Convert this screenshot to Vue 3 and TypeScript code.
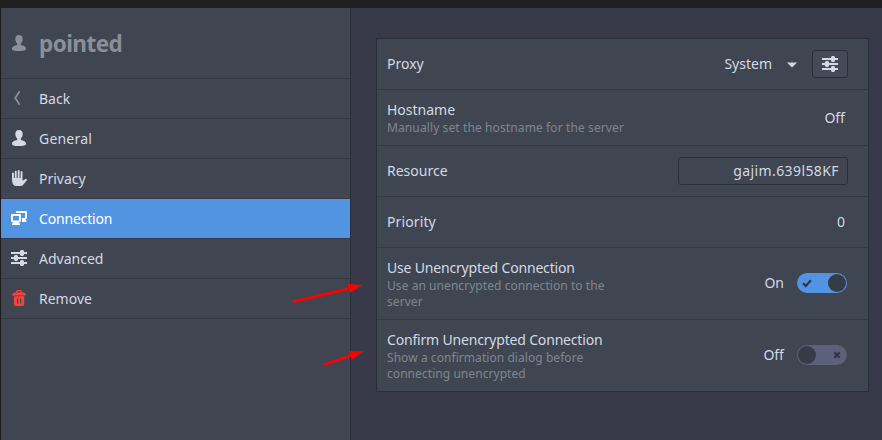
<script setup lang="ts">
import { ref } from 'vue'

interface NavItem { id: string; label: string }
interface Setting {
  id: string
  label: string
  hint?: string
  kind: 'proxy' | 'text' | 'entry' | 'switch'
  value: string
  on?: boolean
}

const account = 'pointed'
const nav: NavItem[] = [
  { id: 'back', label: 'Back' },
  { id: 'general', label: 'General' },
  { id: 'privacy', label: 'Privacy' },
  { id: 'connection', label: 'Connection' },
  { id: 'advanced', label: 'Advanced' },
  { id: 'remove', label: 'Remove' },
]
const active = ref('connection')

const settings = ref<Setting[]>([
  { id: 'proxy', label: 'Proxy', kind: 'proxy', value: 'System' },
  { id: 'hostname', label: 'Hostname', hint: 'Manually set the hostname for the server', kind: 'text', value: 'Off' },
  { id: 'resource', label: 'Resource', kind: 'entry', value: 'gajim.639l58KF' },
  { id: 'priority', label: 'Priority', kind: 'text', value: '0' },
  { id: 'unencrypted', label: 'Use Unencrypted Connection', hint: 'Use an unencrypted connection to the server', kind: 'switch', value: '', on: true },
  { id: 'confirm', label: 'Confirm Unencrypted Connection', hint: 'Show a confirmation dialog before connecting unencrypted', kind: 'switch', value: '', on: false },
])
</script>

<template>
  <div class="window">
    <div class="titlebar"></div>
    <div class="body">
      <aside class="sidebar">
        <header class="account">
          <svg class="icon" viewBox="0 0 16 16"><path d="M8 0C5.700 0 4.300 1.600 4.300 4c0 2 .9 3.600 1.900 4.600v1.500C3.500 10.500 1 11.600 1 14c0 1.500 2.500 2 7 2s7-.5 7-2c0-2.400-2.500-3.500-5.200-3.900V8.600c1-1 1.900-2.600 1.900-4.600C11.700 1.600 10.300 0 8 0z" /></svg>
          <h1>{{ account }}</h1>
        </header>
        <nav>
          <div
            v-for="item in nav"
            :key="item.id"
            class="nav-item"
            :class="[item.id, { active: item.id === active }]"
            @click="active = item.id"
          >
            <svg class="icon" viewBox="0 0 16 16">
              <path v-if="item.id === 'back'" class="stroke" d="M8.600 1.200 4.200 8l4.400 6.800" />
              <path v-else-if="item.id === 'general'" d="M8 0C5.700 0 4.300 1.600 4.300 4c0 2 .9 3.600 1.900 4.600v1.500C3.500 10.500 1 11.600 1 14c0 1.500 2.500 2 7 2s7-.5 7-2c0-2.400-2.500-3.500-5.200-3.900V8.600c1-1 1.900-2.600 1.900-4.600C11.700 1.600 10.300 0 8 0z" />
              <path v-else-if="item.id === 'privacy'" d="M1 3.500a.95.95 0 0 1 1.900 0V8h.9V1.700a.95.95 0 0 1 1.900 0V8h1V1a.95.95 0 0 1 1.900 0v7h1V1.900a.95.95 0 0 1 1.900 0V10l.6.600 2.300-1.500c1-.5 2 .3 1.500 1.200L12.400 14.500Q11.500 16 9.500 16H5q-2.300 0-3.100-2Q1 12 1 9z" />
              <g v-else-if="item.id === 'connection'">
                <path fill-rule="evenodd" d="M1 4h8q1 0 1 1v6q0 1-1 1H8l1 2v1H1v-1l1-2H1q-1 0-1-1V5q0-1 1-1zm1 2v4.500h6V6z" />
                <path d="M5 3V2q0-1 1-1h9q1 0 1 1v6q0 1-1 1h-.5l1 2.200v.8H11V8h3V3z" />
              </g>
              <path v-else-if="item.id === 'advanced'" d="M0 2h9V1l1-1h2l1 1v1h3v2h-3v1l-1 1h-2L9 5V4H0zM0 7h3V6l1-1h2l1 1v1h9v2H7v1l-1 1H4l-1-1V9H0zM0 12h9v-1l1-1h2l1 1v1h3v2h-3v1l-1 1h-2l-1-1v-1H0z" />
              <path v-else fill-rule="evenodd" d="M6.500 0h3q1.500 0 1.700 2.500h1.800q1.500.5 2 2.500v.5H1V5q.5-2 2-2.500h1.800Q5 0 6.500 0zM7 1.300q-.6 0-.7 1.200h3.400Q9.600 1.300 9 1.300zM3 6.200h10.200V14q0 2-1.500 2H4.500Q3 16 3 14zM6 8.300v5.200h1.200V8.300zM9 8.300v5.200h1.200V8.300z" />
            </svg>
            <span>{{ item.label }}</span>
          </div>
        </nav>
      </aside>

      <main class="content">
        <section class="card">
          <div v-for="s in settings" :key="s.id" class="row" :class="s.id">
            <div class="text">
              <div class="label">{{ s.label }}</div>
              <div v-if="s.hint" class="hint">{{ s.hint }}</div>
            </div>
            <div class="control">
              <template v-if="s.kind === 'proxy'">
                <span>{{ s.value }}</span>
                <svg class="caret" viewBox="0 0 10 6"><path d="M0 .5h10L5 5.500z" /></svg>
                <button class="button" aria-label="Proxy settings">
                  <svg class="icon" viewBox="0 0 16 16"><path d="M0 2h9V1l1-1h2l1 1v1h3v2h-3v1l-1 1h-2L9 5V4H0zM0 7h3V6l1-1h2l1 1v1h9v2H7v1l-1 1H4l-1-1V9H0zM0 12h9v-1l1-1h2l1 1v1h3v2h-3v1l-1 1h-2l-1-1v-1H0z" /></svg>
                </button>
              </template>
              <span v-else-if="s.kind === 'text'" class="value">{{ s.value }}</span>
              <div v-else-if="s.kind === 'entry'" class="entry">{{ s.value }}</div>
              <template v-else>
                <span class="state">{{ s.on ? 'On' : 'Off' }}</span>
                <div class="switch" :class="{ on: s.on }" @click="s.on = !s.on">
                  <svg v-if="s.on" class="mark" viewBox="0 0 10 10"><path d="M1 5.200 3.700 8 9 2.300" /></svg>
                  <span class="knob"></span>
                  <svg v-if="!s.on" class="mark" viewBox="0 0 10 10"><path d="m2.300 2.300 5.400 5.400m0-5.400L2.300 7.700" /></svg>
                </div>
              </template>
            </div>
          </div>
        </section>
      </main>
    </div>

    <svg class="arrows" viewBox="0 0 882 440">
      <path d="M293 301.800 348 288.800M323.500 365 351 355.500" />
      <polygon points="362.500,285 347.200,284 350,292.800" />
      <polygon points="364,351 348.800,351.300 351.800,359.800" />
    </svg>
  </div>
</template>

<style>
body { margin: 0; background: #383a49; }
</style>

<style scoped>
.window {
  position: relative;
  width: 882px;
  height: 440px;
  display: flex;
  flex-direction: column;
  overflow: hidden;
  background: #383a49;
  color: #d3dae3;
  font-family: "Noto Sans", sans-serif;
  font-size: 14px;
  line-height: 20px;
}
.titlebar { height: 8px; background: #202020; }
.body { flex: 1; display: flex; min-height: 0; }
.sidebar {
  box-sizing: border-box;
  width: 351px;
  background: #404552;
  border-left: 1px solid #1b1b1d;
  border-right: 1px solid #2b2e39;
}
.icon { display: block; width: 16px; height: 16px; flex: none; fill: currentColor; }
.account {
  box-sizing: border-box;
  height: 71px;
  display: flex;
  align-items: center;
  gap: 12px;
  padding: 0 10px;
  border-bottom: 1px solid #363945;
  color: #8a8f99;
}
.account h1 { margin: 2px 0 0; font-size: 22.500px; line-height: 30px; font-weight: 700; letter-spacing: -0.550px; }
.nav-item {
  box-sizing: border-box;
  height: 40px;
  display: flex;
  align-items: center;
  gap: 12px;
  padding: 0 10px;
  border-bottom: 1px solid #363945;
}
.nav-item .icon { margin-bottom: 1px; }
.nav-item.active { background: #5294e2; color: #fff; }
.general span { letter-spacing: 0.200px; }
.connection span { letter-spacing: -0.180px; }
.back .icon { color: #8c919d; }
.remove .icon { color: #fc4138; }
.stroke { fill: none; stroke: currentColor; stroke-width: 1.700; }
.content { flex: 1; padding: 30px 13px 0 25px; }
.card { background: #404552; border: 1px solid #2b2e39; }
.row {
  box-sizing: border-box;
  height: 51px;
  display: flex;
  align-items: center;
  justify-content: space-between;
  padding: 0 20px 0 10px;
  border-bottom: 1px solid #363945;
}
.hostname { height: 56px; }
.unencrypted, .confirm { height: 72px; }
.confirm { height: 71px; border-bottom: 0; }
.text { width: 240px; white-space: nowrap; }
.label { line-height: 19px; }
.proxy .label, .resource .label, .priority .label { padding-bottom: 2px; }
.priority .label { letter-spacing: 0.120px; }
.unencrypted .label, .confirm .label { letter-spacing: -0.180px; }
.hint {
  color: #7f8590;
  font-size: 12px;
  line-height: 16px;
  letter-spacing: 0.110px;
  white-space: normal;
}
.hostname .hint { margin: 1px 0 -1px; }
.unencrypted .hint, .confirm .hint { margin: 1px 0 -1px; letter-spacing: 0.060px; }
.control { display: flex; align-items: center; }
.unencrypted .control, .confirm .control { padding-bottom: 2px; }
.value { margin-right: 3px; }
.caret { width: 10px; height: 6px; margin: 1px 15px 0; fill: currentColor; }
.button {
  box-sizing: border-box;
  width: 36px;
  height: 28px;
  padding: 0;
  display: grid;
  place-items: center;
  color: inherit;
  background: #444a58;
  border: 1px solid #2b2e39;
  border-radius: 3px;
}
.entry {
  box-sizing: border-box;
  width: 170px;
  height: 28px;
  padding: 0 8px;
  line-height: 26px;
  letter-spacing: 0.400px;
  text-align: right;
  border: 1px solid #2b2e39;
  border-radius: 3px;
}
.state { margin-right: 13px; }
.switch {
  box-sizing: border-box;
  width: 50px;
  height: 20px;
  display: flex;
  align-items: center;
  justify-content: space-between;
  margin-right: 1px;
  padding: 0 5px 0 1px;
  border-radius: 10px;
  background: #5c617b;
}
.switch.on { padding: 0 1px 0 5px; background: #5294e2; }
.knob { width: 18px; height: 18px; border-radius: 50%; background: #363b48; }
.mark { width: 10px; height: 10px; fill: none; stroke: #2d3240; stroke-width: 2; }
.arrows {
  position: absolute;
  inset: 0;
  width: 882px;
  height: 440px;
  pointer-events: none;
  fill: #f00;
}
.arrows path { stroke: #f00; stroke-width: 2.800; }
</style>
